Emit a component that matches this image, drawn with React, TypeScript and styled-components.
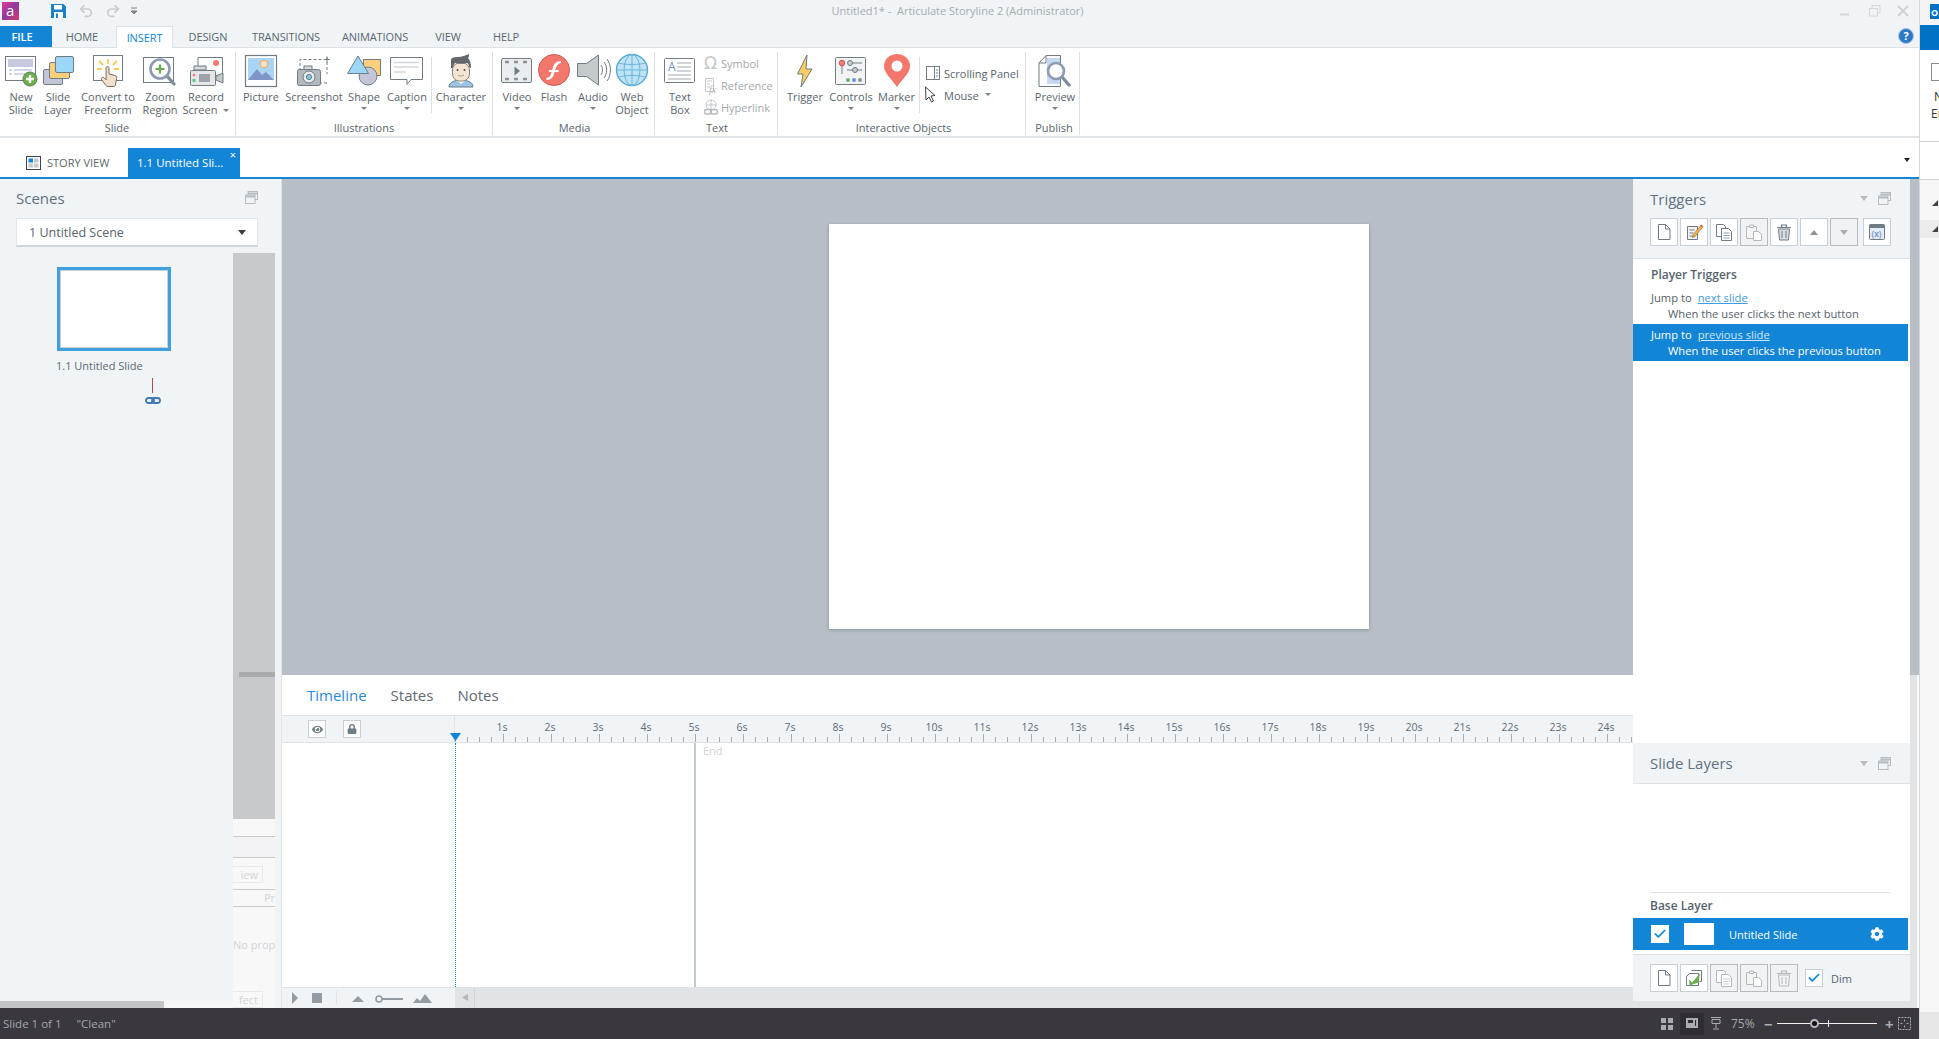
import React from "react";
import styled, { createGlobalStyle } from "styled-components";
import { Check, Redo2, Undo2 } from "lucide-react";
import { FaCog, FaEye, FaLock } from "react-icons/fa";

const GlobalStyle = createGlobalStyle`
  html, body {
    margin: 0;
    padding: 0;
    width: 1939px;
    height: 1039px;
    overflow: hidden;
    font-family: "Open Sans", "Noto Sans", sans-serif;
    background: #f6f6f6;
  }
  * { box-sizing: border-box; }
`;

const Page = styled.div`
  width: 1939px;
  height: 1039px;
  display: flex;
  overflow: hidden;
`;

const Main = styled.div`
  width: 1920px;
  height: 1039px;
  display: flex;
  flex-direction: column;
  border-right: 1px solid #d5d8da;
`;

/* ---- title bar ---- */
const TitleBar = styled.div`
  height: 26px;
  background: #f0f4f7;
  display: grid;
  grid-template-columns: 1fr auto 1fr;
  align-items: center;
  padding-right: 2px;
`;

const Qat = styled.div`
  display: flex;
  align-items: center;
  height: 26px;
  padding: 0 0 4px 2px;
`;

const QatIcon = styled.span<{ $ml: number }>`
  margin-left: ${(p) => p.$ml}px;
  display: flex;
`;

const TitleText = styled.div`
  font-size: 11px;
  color: #a6abb0;
  padding: 0 0 6px 0;
  margin-left: -2px;
  white-space: nowrap;
`;

const WinControls = styled.div`
  display: flex;
  justify-content: flex-end;
  padding: 0 9px 4px 0;
`;

/* ---- menu tabs ---- */
const MenuRow = styled.div`
  height: 22px;
  background: #f0f4f7;
  border-bottom: 1px solid #dde1e4;
  display: flex;
  position: relative;
`;

const MenuTab = styled.div<{ $w: number; $active?: boolean; $file?: boolean; $pr?: number }>`
  width: ${(p) => p.$w}px;
  height: ${(p) => (p.$active ? "22px" : "21px")};
  padding-right: ${(p) => p.$pr ?? 0}px;
  display: flex;
  align-items: center;
  justify-content: center;
  font-size: 11px;
  letter-spacing: -0.1px;
  background: ${(p) => (p.$file ? "#1285d6" : p.$active ? "#fff" : "transparent")};
  color: ${(p) => (p.$file ? "#fff" : p.$active ? "#1285d6" : "#5a666e")};
  border: ${(p) => (p.$active ? "1px solid #dde1e4" : "none")};
  border-bottom: none;
  font-weight: ${(p) => (p.$file ? 600 : 400)};
`;

const HelpBtn = styled.div`
  position: absolute;
  right: 5px;
  top: 2px;
  display: flex;
`;

/* ---- ribbon ---- */
const Ribbon = styled.div`
  height: 90px;
  background: #fff;
  border-bottom: 2px solid #e1e4e6;
  display: flex;
  padding-top: 4px;
  align-items: flex-start;
`;

const Group = styled.div<{ $w: number; $pl?: number }>`
  width: ${(p) => p.$w}px;
  height: 83px;
  border-right: 1px solid #dde1e4;
  padding-left: ${(p) => p.$pl ?? 0}px;
  display: flex;
  flex-direction: column;
  flex-shrink: 0;
`;

const GroupItems = styled.div`
  height: 69px;
  display: flex;
  align-items: flex-start;
`;

const GroupLabel = styled.div<{ $shift?: number }>`
  height: 14px;
  line-height: 14px;
  font-size: 11px;
  color: #59656d;
  text-align: center;
  margin-left: ${(p) => p.$shift ?? 0}px;
`;

const RButton = styled.div<{ $w: number }>`
  width: ${(p) => p.$w}px;
  flex-shrink: 0;
  display: flex;
  flex-direction: column;
  align-items: center;
  padding-top: 2px;
`;

const IconSlot = styled.div`
  width: 40px;
  height: 34px;
  margin-bottom: 2px;
  display: flex;
`;

const RLabel = styled.div`
  font-size: 11px;
  line-height: 13px;
  color: #59656d;
  text-align: center;
  white-space: nowrap;
`;

const Caret = styled.span<{ $inline?: boolean; $color?: string }>`
  display: ${(p) => (p.$inline ? "inline-block" : "block")};
  width: 0;
  height: 0;
  border-left: 3px solid transparent;
  border-right: 3px solid transparent;
  border-top: 3px solid ${(p) => p.$color ?? "#7d8488"};
  margin: ${(p) => (p.$inline ? "0 0 1px 6px" : "4px 0 0")};
  vertical-align: middle;
`;

const VSep = styled.div<{ $ml: number }>`
  width: 1px;
  height: 56px;
  margin: 5px 0 0 ${(p) => p.$ml}px;
  background: #dde1e4;
  flex-shrink: 0;
`;

const SmallCol = styled.div<{ $pt: number; $rowH: number; $ml?: number }>`
  display: grid;
  grid-auto-rows: ${(p) => p.$rowH}px;
  padding-top: ${(p) => p.$pt}px;
  margin-left: ${(p) => p.$ml ?? 0}px;
`;

const SmallItem = styled.div<{ $off?: boolean }>`
  display: flex;
  align-items: center;
  font-size: 11px;
  color: ${(p) => (p.$off ? "#a4a9ad" : "#59656d")};
  white-space: nowrap;
`;

const SmallIcon = styled.span<{ $w: number; $ml?: number }>`
  width: ${(p) => p.$w}px;
  margin-left: ${(p) => p.$ml ?? 0}px;
  display: flex;
  flex-shrink: 0;
`;

/* ---- document tabs ---- */
const DocTabs = styled.div`
  height: 41px;
  padding-top: 10px;
  background: #fff;
  border-bottom: 2px solid #1285d6;
  display: flex;
  position: relative;
`;

const StoryTab = styled.div`
  width: 128px;
  padding-left: 26px;
  display: flex;
  align-items: center;
  font-size: 11px;
  color: #5a666e;
  gap: 6px;
`;

const ActiveDoc = styled.div`
  width: 112px;
  height: 29px;
  background: #1285d6;
  color: #fff;
  font-size: 11.5px;
  display: flex;
  align-items: center;
  padding-left: 9px;
  white-space: nowrap;
  position: relative;
`;

const DocClose = styled.span`
  position: absolute;
  right: 4px;
  top: 0;
  font-size: 11px;
  line-height: 14px;
`;

const TabsCaret = styled.span`
  position: absolute;
  right: 9px;
  top: 20px;
  border-left: 3px solid transparent;
  border-right: 3px solid transparent;
  border-top: 4px solid #222;
`;

/* ---- body ---- */
const Body = styled.div`
  flex: 1;
  min-height: 0;
  display: flex;
  background: #e0e4e7;
`;

const LeftPane = styled.div`
  width: 282px;
  background: #f0f4f7;
  border-right: 1px solid #dfe3e6;
  display: flex;
  flex-direction: column;
  flex-shrink: 0;
`;

const PaneTop = styled.div`
  height: 74px;
  padding: 8px 23px 0 16px;
`;

const PaneTitleRow = styled.div`
  display: flex;
  align-items: center;
  justify-content: space-between;
  height: 21px;
  margin-bottom: 10px;
`;

const PaneTitle = styled.div`
  font-size: 15px;
  color: #5f717f;
`;

const SceneSelect = styled.div`
  height: 29px;
  background: #fff;
  border: 1px solid #e4e7ea;
  border-bottom: 2px solid #cfd4d8;
  display: flex;
  align-items: center;
  justify-content: space-between;
  padding: 0 11px 0 12px;
  font-size: 12.5px;
  color: #57636c;
`;

const SelectCaret = styled.span`
  border-left: 4px solid transparent;
  border-right: 4px solid transparent;
  border-top: 5px solid #3b3f43;
`;

const PaneMain = styled.div`
  flex: 1;
  display: flex;
  min-height: 0;
`;

const ThumbCol = styled.div`
  width: 233px;
  display: flex;
  flex-direction: column;
`;

const ThumbScroll = styled.div`
  flex: 1;
  padding: 14px 0 0 57px;
`;

const Thumb = styled.div`
  width: 114px;
  height: 84px;
  background: #fff;
  border: 3px solid #3fa0e0;
  box-shadow: inset 0 0 0 1px #cfcfd2;
`;

const ThumbLabel = styled.div`
  margin: 8px 0 0 -1px;
  font-size: 11px;
  line-height: 14px;
  color: #5d6973;
`;

const Connector = styled.div`
  width: 1px;
  height: 15px;
  margin: 5px 0 0 95px;
  background: #b9484c;
`;

const LinkWrap = styled.div`
  margin: 4px 0 0 88px;
  display: flex;
`;

const HScroll = styled.div`
  height: 7px;
  background: #f6f6f6;
  display: flex;
`;

const HThumb = styled.div`
  width: 164px;
  background: #c3c5c7;
`;

const SideCol = styled.div`
  width: 42px;
  display: flex;
  flex-direction: column;
`;

const SideBar = styled.div`
  height: 566px;
  background: #c8c9cb;
  padding-top: 419px;
`;

const SideGrip = styled.div`
  width: 36px;
  height: 5px;
  margin-left: 6px;
  background: #a9abad;
`;

const Ghost = styled.div`
  flex: 1;
  background: #f8f8f8;
  display: flex;
  flex-direction: column;
  overflow: hidden;
  padding-top: 17px;
  font-size: 11px;
  color: #d4d4d8;
`;

const GhostBand = styled.div`
  height: 22px;
  background: #f3f3f6;
  border-top: 1px solid #c9c9c9;
  border-bottom: 1px solid #c9c9c9;
`;

const GhostBtn = styled.div<{ $bottom?: boolean }>`
  width: 30px;
  height: 17px;
  margin-top: ${(p) => (p.$bottom ? "auto" : "8px")};
  border: 1px solid #e8e8e8;
  border-left: none;
  text-align: right;
  line-height: 15px;
  padding-right: 4px;
`;

const GhostHead = styled.div`
  height: 18px;
  margin-top: 6px;
  border-top: 1px solid #c9c9c9;
  border-bottom: 1px solid #c9c9c9;
  text-align: right;
  line-height: 16px;
`;

const GhostText = styled.div`
  margin-top: 30px;
  white-space: nowrap;
`;

const Center = styled.div`
  flex: 1;
  min-width: 0;
  display: flex;
  flex-direction: column;
`;

const Canvas = styled.div`
  height: 496px;
  background: #b7bec5;
  padding: 45px 0 0 547px;
`;

const SlidePage = styled.div`
  width: 540px;
  height: 405px;
  background: #fff;
  box-shadow: 0 1px 3px rgba(70, 80, 90, 0.4);
`;

/* ---- timeline ---- */
const Timeline = styled.div`
  flex: 1;
  background: #fff;
  display: flex;
  flex-direction: column;
`;

const TimelineTabs = styled.div`
  height: 40px;
  padding: 0 0 0 25px;
  display: flex;
  align-items: center;
  gap: 24px;
`;

const TimelineTab = styled.div<{ $active?: boolean }>`
  font-size: 15px;
  color: ${(p) => (p.$active ? "#2a8ad8" : "#5f6b74")};
`;

const RulerRow = styled.div`
  height: 28px;
  background: #f0f4f7;
  border-top: 1px solid #dfe3e6;
  border-bottom: 1px solid #dfe3e6;
  display: flex;
`;

const RulerLeft = styled.div`
  width: 173px;
  flex-shrink: 0;
  border-right: 1px solid #dfe3e6;
  padding: 4px 0 0 26px;
  display: flex;
  gap: 17px;
`;

const SquareBtn = styled.div`
  width: 18px;
  height: 18px;
  background: #fff;
  border: 1px solid #c8d0d6;
  display: flex;
  align-items: center;
  justify-content: center;
  color: #6f7d85;
`;

const Tracks = styled.div`
  flex: 1;
  display: flex;
  min-height: 0;
`;

const TrackLeft = styled.div`
  width: 174px;
  flex-shrink: 0;
  border-right: 1px dotted #1285d6;
`;

const TrackRight = styled.div`
  width: 240px;
  flex-shrink: 0;
  border-right: 2px solid #c2c9d0;
`;

const EndLabel = styled.div`
  padding: 0 0 0 7px;
  font-size: 11px;
  color: #cdd4da;
`;

const TimelineBar = styled.div`
  height: 21px;
  background: #e0e4e7;
  border-top: 1px solid #dfe3e6;
  display: flex;
`;

const BarLeft = styled.div`
  width: 173px;
  flex-shrink: 0;
  background: #f0f4f7;
  display: flex;
`;

const BarArrow = styled.div`
  width: 20px;
  height: 20px;
  border-right: 1px solid #d2d6d9;
  display: flex;
  align-items: center;
  justify-content: center;
`;

/* ---- right pane ---- */
const RightPane = styled.div`
  width: 277px;
  flex-shrink: 0;
  background: #fff;
  display: flex;
  flex-direction: column;
`;

const SideHeader = styled.div<{ $h: number }>`
  height: ${(p) => p.$h}px;
  background: #f0f4f7;
  border-bottom: 1px solid #dfe3e6;
  padding: 0 19px 0 17px;
  flex-shrink: 0;
`;

const SideHeaderTop = styled.div<{ $h: number }>`
  height: ${(p) => p.$h}px;
  display: flex;
  align-items: center;
  justify-content: space-between;
`;

const HeaderIcons = styled.div`
  display: flex;
  align-items: center;
  gap: 10px;
`;

const Toolbar = styled.div`
  display: flex;
  gap: 2px;
`;

const ToolBtn = styled.div<{ $off?: boolean; $ml?: number }>`
  width: 28px;
  height: 28px;
  border: 1px solid ${(p) => (p.$off ? "#b7bbbd" : "#c5cfd5")};
  background: ${(p) => (p.$off ? "#f1f2f3" : "#fff")};
  margin-left: ${(p) => p.$ml ?? 0}px;
  display: flex;
  align-items: center;
  justify-content: center;
  flex-shrink: 0;
`;

const TriggerList = styled.div`
  height: 484px;
  padding-top: 7px;
  flex-shrink: 0;
`;

const ListTitle = styled.div`
  font-size: 12px;
  line-height: 18px;
  font-weight: 600;
  color: #56626c;
  padding-left: 18px;
  margin-bottom: 3px;
`;

const TriggerRow = styled.div<{ $selected?: boolean }>`
  width: 275px;
  height: 37px;
  padding: 3px 0 0 18px;
  font-size: 11.2px;
  line-height: 16px;
  background: ${(p) => (p.$selected ? "#1285d6" : "transparent")};
  color: ${(p) => (p.$selected ? "#fff" : "#56626c")};
`;

const TriggerLink = styled.span<{ $selected?: boolean }>`
  color: ${(p) => (p.$selected ? "#cfe7f8" : "#3f9ae0")};
  text-decoration: underline;
  margin-left: 6px;
`;

const TriggerSub = styled.div`
  padding-left: 17px;
  white-space: nowrap;
`;

const LayersBody = styled.div`
  flex: 1;
  display: flex;
  flex-direction: column;
  justify-content: flex-end;
  min-height: 0;
`;

const LayersRule = styled.div`
  margin: 0 20px 0 18px;
  height: 1px;
  background: #dfe3e6;
`;

const BaseTitle = styled.div`
  font-size: 12px;
  font-weight: 600;
  line-height: 25px;
  color: #56626c;
  padding-left: 17px;
`;

const LayerRow = styled.div`
  width: 275px;
  height: 32px;
  margin-bottom: 4px;
  background: #1285d6;
  display: flex;
  align-items: center;
  padding-left: 18px;
  color: #fff;
  font-size: 11px;
`;

const CheckBox = styled.div<{ $bordered?: boolean }>`
  width: 18px;
  height: 18px;
  background: #fff;
  border: 1px solid ${(p) => (p.$bordered ? "#c5cfd5" : "#fff")};
  display: flex;
  align-items: center;
  justify-content: center;
  color: #1285d6;
  flex-shrink: 0;
`;

const LayerSwatch = styled.div`
  width: 30px;
  height: 22px;
  margin: 0 15px;
  background: #fff;
`;

const LayerGear = styled.div`
  margin-left: auto;
  margin-right: 24px;
  display: flex;
`;

const LayerToolbar = styled.div`
  height: 47px;
  background: #f0f4f7;
  border-top: 1px solid #dfe3e6;
  padding: 9px 0 0 17px;
  display: flex;
  align-items: flex-start;
  flex-shrink: 0;
`;

const DimWrap = styled.div`
  display: flex;
  align-items: center;
  gap: 8px;
  margin: 5px 0 0 7px;
  font-size: 11px;
  color: #56626c;
`;

const PaneFoot = styled.div`
  height: 7px;
  background: #e0e4e7;
  flex-shrink: 0;
`;

const Strip = styled.div`
  width: 9px;
  display: flex;
  flex-direction: column;
  flex-shrink: 0;
`;

const StripTop = styled.div`
  height: 496px;
  background: #b7bec5;
`;

const StripBottom = styled.div`
  flex: 1;
  background: #e0e4e7;
  border-right: 2px solid #fbfbfb;
`;

/* ---- status bar ---- */
const StatusBar = styled.div`
  height: 31px;
  background: #3a373f;
  color: #a5a9ad;
  font-size: 11.5px;
  display: flex;
  align-items: center;
  padding: 0 8px 0 3px;
`;

const StatusClean = styled.span`
  margin-left: 15px;
`;

const StatusRight = styled.div`
  margin-left: auto;
  display: flex;
  align-items: center;
`;

const ViewBtn = styled.div<{ $active?: boolean; $ml: number }>`
  width: 24px;
  height: 22px;
  margin-left: ${(p) => p.$ml}px;
  background: ${(p) => (p.$active ? "#2f2c33" : "transparent")};
  display: flex;
  align-items: center;
  justify-content: center;
`;

const ZoomPct = styled.span`
  width: 33px;
  margin-left: 3px;
  font-size: 12px;
`;

const ZoomSign = styled.span`
  width: 8px;
  font-size: 15px;
  line-height: 16px;
  font-weight: 700;
  color: #a9adb1;
  text-align: center;
`;

const ZoomTrack = styled.div`
  position: relative;
  width: 100px;
  height: 1px;
  background: #f2f2f2;
  margin: 0 8px 0 5px;
`;

const ZoomKnob = styled.div`
  position: absolute;
  left: 33px;
  top: -4px;
  width: 9px;
  height: 9px;
  border-radius: 50%;
  background: #111;
  border: 2px solid #b9b9b9;
`;

const ZoomTick = styled.div`
  position: absolute;
  left: 51px;
  top: -3px;
  width: 1px;
  height: 7px;
  background: #f2f2f2;
`;

const FitBtn = styled.span`
  margin-left: 5px;
  display: flex;
`;

/* ---- other window behind, right edge ---- */
const OtherWindow = styled.div`
  width: 19px;
  height: 1039px;
  background: #f7f7f7;
  overflow: hidden;
  display: flex;
  flex-direction: column;
`;

const OtherTop = styled.div`
  height: 25px;
  padding: 4px 0 0 10px;
  background: #f4f4f4;
`;

const OtherBand = styled.div`
  height: 25px;
  background: #0072c6;
`;

const OtherRibbon = styled.div`
  height: 92px;
  background: #fff;
  border-bottom: 1px solid #d2d2d2;
  padding: 13px 0 0 11px;
  font-size: 12px;
  line-height: 17px;
  color: #333;
  white-space: nowrap;
`;

const OtherDoc = styled.div`
  width: 20px;
  height: 18px;
  border: 1px solid #8b8b8b;
  margin-bottom: 7px;
`;

const OtherGap = styled.div`
  height: 38px;
  background: #fff;
  border-bottom: 1px solid #d2d2d2;
`;

const OtherTree = styled.div<{ $shade?: boolean; $mt: number }>`
  height: 18px;
  margin-top: ${(p) => p.$mt}px;
  display: flex;
  align-items: center;
  padding-left: 12px;
  background: ${(p) => (p.$shade ? "#ececec" : "transparent")};
`;

const TreeArrow = styled.span`
  width: 0;
  height: 0;
  border-left: 6px solid transparent;
  border-bottom: 6px solid #444;
`;

const OtherFill = styled.div`
  flex: 1;
  background: #f7f7f7;
`;

const OtherFoot = styled.div`
  height: 27px;
  background: #e6e6e6;
`;

/* ---- drawings ---- */
const Svg: React.FC<{ w?: number; h?: number; children: React.ReactNode }> = ({ w = 40, h = 34, children }) => (
  <svg width={w} height={h} viewBox={`0 0 ${w} ${h}`} fill="none" style={{ overflow: "visible", display: "block" }}>
    {children}
  </svg>
);

const S = "#6f7c84";

const NewSlideIcon = () => (
  <Svg>
    <rect x="4.5" y="2.5" width="30" height="24" fill="#fff" stroke={S} />
    <rect x="7" y="5" width="25" height="8" fill="#c5cadf" />
    <path d="M8 16h3M13 16h18M8 20h3M13 20h12" stroke="#c5cadf" strokeWidth="1.6" />
    <circle cx="29" cy="25" r="7" fill="#6cad4f" stroke="#5d7f55" />
    <path d="M29 21v8M25 25h8" stroke="#fff" strokeWidth="2.4" />
  </Svg>
);

const SlideLayerIcon = () => (
  <Svg>
    <rect x="5.5" y="15.5" width="19" height="15" rx="1.5" fill="#c2c6d8" stroke={S} />
    <rect x="11.5" y="8.5" width="20" height="16" rx="1.5" fill="#fdd07c" stroke={S} />
    <rect x="17.5" y="2.5" width="18" height="16" rx="1.5" fill="#9bd8f7" stroke={S} />
  </Svg>
);

const FreeformIcon = () => (
  <Svg>
    <rect x="5.5" y="1.5" width="29" height="25" fill="#fff" stroke={S} />
    <path d="M20 5v5M11 7l4 4M29 7l-4 4M9 15h5M26 15h5" stroke="#fbc95f" strokeWidth="1.8" />
    <path
      d="M18 14c0-2 3-2 3 0v6l6 1.5c1.5.4 2 1.2 1.6 3l-1.2 6.5c-.2 1-.8 1.5-2 1.5h-5.5c-1 0-1.6-.4-2.2-1.2l-4-5.5c-1.2-1.8 1-3.4 2.4-2l2 2z"
      fill="#f0e1cd"
      stroke="#7d6a5a"
    />
  </Svg>
);

const ZoomRegionIcon = () => (
  <Svg>
    <rect x="3.5" y="3.5" width="30" height="25" fill="#fff" stroke={S} />
    <path d="M27 22l7 8" stroke="#7f8c9c" strokeWidth="3.4" strokeLinecap="round" />
    <circle cx="20" cy="15" r="9.5" fill="#fff" stroke="#8d9bb0" strokeWidth="2.6" />
    <path d="M20 10.5v9M15.5 15h9" stroke="#64ae4c" strokeWidth="2.2" />
  </Svg>
);

const RecordIcon = () => (
  <Svg>
    <path d="M12 15V3.5h24.5v18H29" fill="#fff" stroke={S} />
    <circle cx="30" cy="9" r="3" fill="#ee7b74" />
    <rect x="8" y="12" width="12" height="4" fill="#d6d9dc" stroke={S} />
    <rect x="4.5" y="16.5" width="25" height="15" rx="1" fill="#e4e6e8" stroke={S} />
    <rect x="13" y="20" width="11" height="8" fill="#9da3a8" />
    <circle cx="8" cy="21" r="1.3" fill="#ee7b74" />
    <rect x="6.5" y="25" width="3" height="3" fill="#6cc28f" />
    <path d="M30 22l7-3v10l-7-3z" fill="#c4c9cc" stroke={S} />
  </Svg>
);

const PictureIcon = () => (
  <Svg>
    <rect x="4.5" y="1.5" width="31" height="31" fill="#fff" stroke={S} strokeWidth="1.2" />
    <rect x="7" y="4" width="26" height="22" fill="#a9d4f3" />
    <circle cx="23" cy="10" r="3.8" fill="#fbe3c0" stroke="#f3a86c" />
    <path d="M7 26l9-11 5 6 4-3 8 8z" fill="#7f95c8" />
  </Svg>
);

const ScreenshotIcon = () => (
  <Svg>
    <path d="M6 17V5.5h26M33 3v17M33 29h-6" stroke={S} strokeDasharray="3 2" />
    <path d="M30 5.5h6M33 2.5v6" stroke={S} />
    <rect x="10" y="12" width="8" height="4" fill="#d9dcdf" stroke={S} />
    <rect x="3.5" y="15.5" width="23" height="16" rx="2" fill="#b3b8bc" stroke={S} />
    <circle cx="15" cy="23" r="6" fill="#e8ebed" stroke={S} />
    <circle cx="15" cy="23" r="2.6" fill="#7ccbe0" stroke={S} />
  </Svg>
);

const ShapeIcon = () => (
  <Svg>
    <rect x="19.5" y="5.5" width="17" height="16" fill="#fdd07c" stroke={S} />
    <circle cx="24" cy="22" r="9" fill="#c2c6d8" stroke={S} />
    <path d="M14 2L3.5 19.5h21z" fill="#9bd8f7" stroke={S} />
  </Svg>
);

const CaptionIcon = () => (
  <Svg>
    <path d="M3.5 3.5h32v22H24l-4 5v-5H3.5z" fill="#fff" stroke={S} />
    <path d="M7 8.5h25M7 13h25M7 18h12" stroke="#d4d6d9" strokeWidth="1.6" />
  </Svg>
);

const CharacterIcon = () => (
  <Svg>
    <path d="M8 33c0-5 6-7 12-7s12 2 12 7z" fill="#9bc4e8" stroke={S} />
    <path d="M15 26l5 4 5-4z" fill="#fff" />
    <rect x="11.5" y="9" width="17" height="18" rx="7" fill="#f4e4d2" stroke="#8b8378" />
    <path d="M10 14V6c0-2 3-3 6-3 5 0 9-2 12-3 0 2 0 3-1 4 2 2 3 5 3 10l-2-1c0-2-1-4-2-4-3 1-8 1-12 0-1 1-2 3-2 5z" fill="#63686c" />
    <circle cx="16.5" cy="16" r="1" fill="#55504a" />
    <circle cx="23.5" cy="16" r="1" fill="#55504a" />
    <path d="M17 21c2 1.4 4 1.4 6 0" stroke="#a7967f" />
  </Svg>
);

const VideoIcon = () => (
  <Svg>
    <rect x="4.5" y="4.5" width="30" height="24" rx="1.5" fill="#e9edf0" stroke={S} />
    <path d="M8 8h4M17 8h4M26 8h4M8 25h4M17 25h4M26 25h4" stroke="#8b9298" strokeWidth="2.4" />
    <path d="M17.5 12.5l5.5 4.5-5.5 4.5z" fill="#6f7c84" />
  </Svg>
);

const FlashIcon = () => (
  <Svg>
    <circle cx="20" cy="16" r="15.5" fill="#f4776c" stroke="#cf5a50" />
    <path
      d="M27 7c-5 0-7 3-8 6l-.8 3h-3l-.5 2h3c-1 3.5-2 5.500-5.200 6v2c5 0 7-3 8.200-8h3.700l.5-2h-3.700c1-3 2.300-6.500 5.800-7z"
      fill="#fff"
    />
  </Svg>
);

const AudioIcon = () => (
  <Svg>
    <path d="M4.5 9.5h9l12-8.500v30l-12-8.500h-9z" fill="#c4c9cc" stroke={S} />
    <path d="M28 11c2 3 2 7 0 10M31 8c3.500 4.500 3.500 11.500 0 16M34 5c4.500 6 4.500 16 0 22" stroke={S} />
  </Svg>
);

const WebIcon = () => (
  <Svg>
    <circle cx="20" cy="16" r="15.5" fill="#bfe3f6" stroke="#5aa9cc" strokeWidth="1.4" />
    <path d="M20 .5v31M4.5 16h31M6 9c8 2 20 2 28 0M6 23c8-2 20-2 28 0" stroke="#6bb4d6" />
    <ellipse cx="20" cy="16" rx="8" ry="15.5" stroke="#6bb4d6" />
  </Svg>
);

const TextBoxIcon = () => (
  <Svg>
    <rect x="4.5" y="4.5" width="30" height="24" rx="1" fill="#fff" stroke={S} />
    <text x="8" y="17" fontSize="12" fontFamily="Open Sans" fill="#6f8fd0">A</text>
    <path d="M17 9h14M17 13h14M17 17h14M8 21h23M8 25h23" stroke="#c2c6ca" strokeWidth="1.5" />
  </Svg>
);

const TriggerIcon = () => (
  <Svg>
    <path d="M22 1L12.5 20h5.5L16 33l11-18h-6z" fill="#fbcb65" stroke={S} />
  </Svg>
);

const ControlsIcon = () => (
  <Svg>
    <rect x="4.5" y="3.5" width="30" height="27" rx="1" fill="#f1f3f4" stroke={S} />
    <circle cx="11" cy="9" r="2.8" fill="#ee7b74" stroke="#b95f5a" />
    <path d="M11 12v8M20 9h11" stroke={S} />
    <circle cx="19" cy="9" r="2.5" fill="#c6ccd0" stroke={S} />
    <path d="M16 16h15" stroke={S} />
    <circle cx="24" cy="16" r="2.5" fill="#c6ccd0" stroke={S} />
    <circle cx="17" cy="26" r="2" fill="#6cb46c" />
    <circle cx="23" cy="26" r="2" fill="#6f95d8" />
    <circle cx="29" cy="26" r="2" fill="#8b9298" />
  </Svg>
);

const MarkerIcon = () => (
  <Svg>
    <path d="M20 33C13 23 7 19 7 12a13 12 0 0 1 26 0c0 7-6 11-13 21z" fill="#f4776c" />
    <circle cx="20" cy="12" r="5.5" fill="#fff" />
  </Svg>
);

const PreviewIcon = () => (
  <Svg>
    <path d="M4 9l7-7.500h14.500v31H4z" fill="#fff" stroke={S} />
    <path d="M4 9h7V1.500" stroke={S} />
    <rect x="12" y="4" width="13" height="26" fill="#c6d8f2" />
    <path d="M27 23l7 8" stroke="#7f8c9c" strokeWidth="3.4" strokeLinecap="round" />
    <circle cx="21" cy="17" r="8" fill="#fff" stroke="#8d9bb0" strokeWidth="2.6" />
  </Svg>
);

const SmallGlyph: React.FC<{ kind: string }> = ({ kind }) => (
  <Svg w={16} h={16}>
    {kind === "symbol" && (
      <text x="1" y="14" fontSize="17" fontFamily="DejaVu Sans" fill="#c3c7ca">Ω</text>
    )}
    {kind === "ref" && (
      <>
        <path d="M2.5 1.5h8v13h-8z" stroke="#c3c7ca" />
        <path d="M4 4h5M4 7h3M4 10h3" stroke="#c3c7ca" />
        <text x="6" y="16" fontSize="10" fontStyle="italic" fontFamily="Liberation Serif" fill="#b1b5b8">fx</text>
      </>
    )}
    {kind === "link" && (
      <>
        <circle cx="8" cy="6" r="5" stroke="#c3c7ca" />
        <path d="M3 6h10M8 1v10" stroke="#c3c7ca" />
        <rect x="1.5" y="10.5" width="7" height="4.5" rx="2.2" stroke="#b6babd" strokeWidth="1.4" />
        <rect x="7.5" y="10.5" width="7" height="4.5" rx="2.2" stroke="#b6babd" strokeWidth="1.4" />
      </>
    )}
    {kind === "panel" && (
      <>
        <rect x="1.5" y="1.5" width="13" height="13" fill="#fff" stroke={S} />
        <path d="M9.5 1.5v13M11 5h2M11 8h2M11 11h2" stroke={S} />
      </>
    )}
    {kind === "mouse" && (
      <path d="M1.5 1l.5 13 3-3 2.5 5 2-1-2.500-5 4-.5z" fill="#fff" stroke="#444" transform="translate(-1 -1)" />
    )}
  </Svg>
);

const RestoreIcon: React.FC<{ color?: string }> = ({ color = "#b5bdc3" }) => (
  <Svg w={13} h={13}>
    <rect x="3" y=".5" width="9.5" height="8" stroke={color} fill="#f0f4f7" />
    <path d="M3 2.5h9.5" stroke={color} strokeWidth="2" />
    <rect x=".5" y="4" width="9.5" height="8.5" stroke={color} fill="#f0f4f7" />
    <path d="M.5 5.500H10" stroke={color} strokeWidth="2" />
  </Svg>
);

const DownCaret = styled.span`
  border-left: 4px solid transparent;
  border-right: 4px solid transparent;
  border-top: 5px solid #b5bdc3;
`;

type ToolKind = "new" | "edit" | "copy" | "paste" | "trash" | "up" | "down" | "vars" | "dup";

const ToolGlyph: React.FC<{ kind: ToolKind; off?: boolean }> = ({ kind, off }) => {
  const c = off ? "#b4b9bc" : "#6f7c84";
  return (
    <Svg w={18} h={18}>
      {kind === "new" && <path d="M3.5 1.5h7l4.5 4.5v10.5H3.5zM10.5 1.5V6H15" stroke={c} fill="#fff" />}
      {kind === "edit" && (
        <>
          <path d="M2.5 3.5h10v13h-10z" stroke={c} fill="#f1f2f3" />
          <path d="M4.5 7h5M4.5 10h4M4.5 13h6" stroke={c} />
          <path d="M8 12l8-10 2 1.5-8 10-2.5 1z" fill="#fbb54e" stroke="#9a6b3a" strokeWidth=".7" />
          <path d="M15 2.5l1-1 2 1.500-1 1.200z" fill="#e46a5f" />
        </>
      )}
      {kind === "copy" && (
        <>
          <path d="M1.5 1.5h7l2 2v10h-9z" stroke={c} fill="#fff" />
          <path d="M6.5 5.5h7l3 3v9h-10z" stroke={c} fill="#fff" />
          <path d="M8.5 10h6M8.5 12.5h6M8.5 15h6" stroke={off ? "#ccd0d3" : "#8ca3c4"} />
        </>
      )}
      {kind === "paste" && (
        <>
          <path d="M1.5 3.5h10v12h-10z" stroke={c} fill="#f4f4f4" />
          <path d="M4.5 4.5V2h4v2.5z" stroke={c} fill="#fff" />
          <path d="M8.5 8.5h5l3 3v6h-8z" stroke={c} fill="#fff" />
        </>
      )}
      {kind === "trash" && (
        <>
          <path d="M2 4.5h14M6.5 4.5V2h5v2.500" stroke={c} strokeWidth="1.2" />
          <path d="M3.5 6h11l-1 11h-9z" stroke={c} fill={off ? "#f4f4f4" : "#d9dde0"} />
          <path d="M7 8v7M11 8v7" stroke={c} />
        </>
      )}
      {kind === "up" && <path d="M5 12l4-5 4 5z" fill="#8a9196" />}
      {kind === "down" && <path d="M5 7h8l-4 5z" fill="#a8aeb2" />}
      {kind === "vars" && (
        <>
          <rect x="1.5" y="1.5" width="15" height="15" rx="1" fill="#e4ebf6" stroke={c} />
          <rect x="1.5" y="1.5" width="15" height="3.5" fill={c} />
          <text x="3.5" y="13.5" fontSize="8" fontWeight="700" fontFamily="Open Sans" fill="#7f9ccc">(x)</text>
        </>
      )}
      {kind === "dup" && (
        <>
          <path d="M6.5 1.5h10v11h-2" stroke={c} fill="#fff" />
          <path d="M1.5 7.5l3-3h9v12h-12z" stroke={c} fill="#fff" />
          <path d="M4 10.5l3 3 8-9-1.500 9-9 3z" fill="#6cad4f" />
        </>
      )}
    </Svg>
  );
};

const AppLogo = () => (
  <svg width="17" height="18" viewBox="0 0 17 18" style={{ display: "block" }}>
    <defs>
      <linearGradient id="logoFill" x1="0" y1="0" x2="1" y2="1">
        <stop offset="0" stopColor="#e8379a" />
        <stop offset="0.5" stopColor="#8c3b9e" />
        <stop offset="1" stopColor="#d93a6e" />
      </linearGradient>
    </defs>
    <rect width="17" height="18" fill="url(#logoFill)" />
    <text x="4" y="14" fontSize="15" fontFamily="Open Sans" fill="#fff">a</text>
  </svg>
);

const SaveIcon = () => (
  <Svg w={15} h={14}>
    <path d="M0 0h12.5L15 2.5V14H0z" fill="#1a80c8" />
    <rect x="3" y="1" width="8" height="4.5" fill="#fff" />
    <rect x="3" y="8" width="9" height="6" fill="#fff" />
    <rect x="5" y="9.5" width="2" height="4.5" fill="#1a80c8" />
  </Svg>
);

const ChainIcon = () => (
  <Svg w={16} h={7}>
    <rect x="1" y="1" width="8" height="5" rx="2.5" stroke="#3f78b5" strokeWidth="1.8" />
    <rect x="7" y="1" width="8" height="5" rx="2.5" stroke="#3f78b5" strokeWidth="1.8" />
  </Svg>
);

const ruler = Array.from({ length: 24 * 4 + 4 }, (_, i) => i);

const RulerTrack = () => (
  <svg width="1177" height="26" style={{ overflow: "visible", display: "block" }}>
    {ruler.map((i) => (
      <line
        key={i}
        x1={i * 12 + 0.5}
        x2={i * 12 + 0.5}
        y1={i % 4 === 0 ? 18 : 21}
        y2={26}
        stroke="#a7aeb3"
        strokeWidth={1}
      />
    ))}
    {Array.from({ length: 24 }, (_, i) => i + 1).map((s) => (
      <text key={s} x={s * 48 - 1} y={15} fontSize="10.5" fontFamily="Open Sans" fill="#5f6b74" textAnchor="middle">
        {s}s
      </text>
    ))}
    <path d="M-5 17h11l-5.5 8z" fill="#1285d6" />
  </svg>
);

function RibbonBtn(props: { w: number; icon: React.ReactNode; label: React.ReactNode; caret?: boolean }) {
  return (
    <RButton $w={props.w}>
      <IconSlot>{props.icon}</IconSlot>
      <RLabel>{props.label}</RLabel>
      {props.caret && <Caret />}
    </RButton>
  );
}

const App: React.FC = () => {
  return (
    <>
      <GlobalStyle />
      <Page>
        <Main>
          <TitleBar>
            <Qat>
              <AppLogo />
              <QatIcon $ml={32}><SaveIcon /></QatIcon>
              <QatIcon $ml={12}><Undo2 size={16} color="#c9cdd1" strokeWidth={2.6} /></QatIcon>
              <QatIcon $ml={11}><Redo2 size={16} color="#c9cdd1" strokeWidth={2.6} /></QatIcon>
              <QatIcon $ml={9}>
                <Svg w={8} h={8}>
                  <path d="M1 1h6M1 4h6l-3 3z" stroke="#7c8389" fill="#7c8389" />
                </Svg>
              </QatIcon>
            </Qat>
            <TitleText>Untitled1* -&nbsp; Articulate Storyline 2 (Administrator)</TitleText>
            <WinControls>
              <Svg w={70} h={14}>
                <path d="M2 10.5h9" stroke="#d3d7da" strokeWidth="2" />
                <g transform="translate(31 1)">
                  <rect x="3" y=".5" width="8" height="7" stroke="#d3d7da" />
                  <rect x=".5" y="3.5" width="8" height="7.5" stroke="#d3d7da" fill="#f0f4f7" />
                </g>
                <path d="M60 2l10 10M70 2L60 12" stroke="#cfd3d6" strokeWidth="2" />
              </Svg>
            </WinControls>
          </TitleBar>

          <MenuRow>
            <MenuTab $w={52} $file $pr={8}>FILE</MenuTab>
            <MenuTab $w={64} $pr={4}>HOME</MenuTab>
            <MenuTab $w={57} $active>INSERT</MenuTab>
            <MenuTab $w={70}>DESIGN</MenuTab>
            <MenuTab $w={86}>TRANSITIONS</MenuTab>
            <MenuTab $w={92}>ANIMATIONS</MenuTab>
            <MenuTab $w={54}>VIEW</MenuTab>
            <MenuTab $w={62}>HELP</MenuTab>
            <HelpBtn>
              <svg width="16" height="16" viewBox="0 0 16 16" style={{ display: "block" }}>
                <circle cx="8" cy="8" r="7.5" fill="#2f79c9" stroke="#a8c4e2" />
                <text x="8" y="12" fontSize="11" fontWeight="700" fontFamily="Open Sans" fill="#fff" textAnchor="middle">?</text>
              </svg>
            </HelpBtn>
          </MenuRow>

          <Ribbon>
            <Group $w={236} $pl={2}>
              <GroupItems>
                <RibbonBtn w={38} icon={<NewSlideIcon />} label={<>New<br />Slide</>} />
                <RibbonBtn w={36} icon={<SlideLayerIcon />} label={<>Slide<br />Layer</>} />
                <RibbonBtn w={64} icon={<FreeformIcon />} label={<>Convert to<br />Freeform</>} />
                <RibbonBtn w={40} icon={<ZoomRegionIcon />} label={<>Zoom<br />Region</>} />
                <RibbonBtn w={52} icon={<RecordIcon />} label={<>Record<br />Screen<Caret $inline /></>} />
              </GroupItems>
              <GroupLabel $shift={-3}>Slide</GroupLabel>
            </Group>

            <Group $w={257}>
              <GroupItems>
                <RibbonBtn w={50} icon={<PictureIcon />} label="Picture" />
                <RibbonBtn w={56} icon={<ScreenshotIcon />} label="Screenshot" caret />
                <RibbonBtn w={44} icon={<ShapeIcon />} label="Shape" caret />
                <RibbonBtn w={42} icon={<CaptionIcon />} label="Caption" caret />
                <VSep $ml={3} />
                <RibbonBtn w={58} icon={<CharacterIcon />} label="Character" caret />
              </GroupItems>
              <GroupLabel>Illustrations</GroupLabel>
            </Group>

            <Group $w={162}>
              <GroupItems>
                <RibbonBtn w={48} icon={<VideoIcon />} label="Video" caret />
                <RibbonBtn w={26} icon={<FlashIcon />} label="Flash" />
                <RibbonBtn w={52} icon={<AudioIcon />} label="Audio" caret />
                <RibbonBtn w={26} icon={<WebIcon />} label={<>Web<br />Object</>} />
              </GroupItems>
              <GroupLabel $shift={2}>Media</GroupLabel>
            </Group>

            <Group $w={123}>
              <GroupItems>
                <RibbonBtn w={50} icon={<TextBoxIcon />} label={<>Text<br />Box</>} />
                <SmallCol $pt={0} $rowH={22} $ml={-2}>
                  <SmallItem $off><SmallIcon $w={18}><SmallGlyph kind="symbol" /></SmallIcon>Symbol</SmallItem>
                  <SmallItem $off><SmallIcon $w={18}><SmallGlyph kind="ref" /></SmallIcon>Reference</SmallItem>
                  <SmallItem $off><SmallIcon $w={18}><SmallGlyph kind="link" /></SmallIcon>Hyperlink</SmallItem>
                </SmallCol>
              </GroupItems>
              <GroupLabel $shift={2}>Text</GroupLabel>
            </Group>

            <Group $w={248} $pl={4}>
              <GroupItems>
                <RibbonBtn w={46} icon={<TriggerIcon />} label="Trigger" />
                <RibbonBtn w={46} icon={<ControlsIcon />} label="Controls" caret />
                <RibbonBtn w={45} icon={<MarkerIcon />} label="Marker" caret />
                <VSep $ml={0} />
                <SmallCol $pt={10} $rowH={22}>
                  <SmallItem><SmallIcon $w={19} $ml={5}><SmallGlyph kind="panel" /></SmallIcon>Scrolling Panel</SmallItem>
                  <SmallItem><SmallIcon $w={19} $ml={5}><SmallGlyph kind="mouse" /></SmallIcon>Mouse<Caret $inline /></SmallItem>
                </SmallCol>
              </GroupItems>
              <GroupLabel>Interactive Objects</GroupLabel>
            </Group>

            <Group $w={54} $pl={3}>
              <GroupItems>
                <RibbonBtn w={52} icon={<PreviewIcon />} label="Preview" caret />
              </GroupItems>
              <GroupLabel>Publish</GroupLabel>
            </Group>
          </Ribbon>

          <DocTabs>
            <StoryTab>
              <Svg w={15} h={14}>
                <rect x=".5" y=".5" width="14" height="13" fill="#fff" stroke="#3e4448" />
                <rect x="2.5" y="2.5" width="4.5" height="4" fill="#1285d6" />
                <rect x="8" y="2.5" width="4.5" height="4" fill="#c4c8cb" />
                <rect x="2.5" y="7.5" width="4.5" height="4" fill="#c4c8cb" />
                <rect x="8" y="7.5" width="4.5" height="4" fill="#c4c8cb" />
              </Svg>
              STORY VIEW
            </StoryTab>
            <ActiveDoc>
              1.1 Untitled Sli...
              <DocClose>×</DocClose>
            </ActiveDoc>
            <TabsCaret />
          </DocTabs>

          <Body>
            <LeftPane>
              <PaneTop>
                <PaneTitleRow>
                  <PaneTitle>Scenes</PaneTitle>
                  <RestoreIcon />
                </PaneTitleRow>
                <SceneSelect>
                  1 Untitled Scene
                  <SelectCaret />
                </SceneSelect>
              </PaneTop>
              <PaneMain>
                <ThumbCol>
                  <ThumbScroll>
                    <Thumb />
                    <ThumbLabel>1.1 Untitled Slide</ThumbLabel>
                    <Connector />
                    <LinkWrap><ChainIcon /></LinkWrap>
                  </ThumbScroll>
                  <HScroll><HThumb /></HScroll>
                </ThumbCol>
                <SideCol>
                  <SideBar><SideGrip /></SideBar>
                  <Ghost>
                    <GhostBand />
                    <GhostBtn>iew</GhostBtn>
                    <GhostHead>Pr</GhostHead>
                    <GhostText>No prope</GhostText>
                    <GhostBtn $bottom>fect</GhostBtn>
                  </Ghost>
                </SideCol>
              </PaneMain>
            </LeftPane>

            <Center>
              <Canvas><SlidePage /></Canvas>
              <Timeline>
                <TimelineTabs>
                  <TimelineTab $active>Timeline</TimelineTab>
                  <TimelineTab>States</TimelineTab>
                  <TimelineTab>Notes</TimelineTab>
                </TimelineTabs>
                <RulerRow>
                  <RulerLeft>
                    <SquareBtn><FaEye size={11} /></SquareBtn>
                    <SquareBtn><FaLock size={10} /></SquareBtn>
                  </RulerLeft>
                  <RulerTrack />
                </RulerRow>
                <Tracks>
                  <TrackLeft />
                  <TrackRight />
                  <EndLabel>End</EndLabel>
                </Tracks>
                <TimelineBar>
                  <BarLeft>
                    <Svg w={173} h={20}>
                      <path d="M10 4l6 6-6 6z" fill="#939ca3" />
                      <rect x="30" y="5" width="10" height="10" fill="#939ca3" />
                      <path d="M54.5 3v13" stroke="#dfe3e6" />
                      <path d="M70 14l6-6 6 6z" fill="#939ca3" />
                      <circle cx="97" cy="11" r="3" stroke="#939ca3" strokeWidth="1.6" fill="#f0f4f7" />
                      <path d="M100 11h21" stroke="#939ca3" strokeWidth="2" />
                      <path d="M131 15l4-5 3 3 5-7 7 9z" fill="#939ca3" />
                    </Svg>
                  </BarLeft>
                  <BarArrow>
                    <Svg w={6} h={8}><path d="M6 0v7L0 3.5z" fill="#b3b9bd" /></Svg>
                  </BarArrow>
                </TimelineBar>
              </Timeline>
            </Center>

            <RightPane>
              <SideHeader $h={80}>
                <SideHeaderTop $h={39}>
                  <PaneTitle>Triggers</PaneTitle>
                  <HeaderIcons><DownCaret /><RestoreIcon /></HeaderIcons>
                </SideHeaderTop>
                <Toolbar>
                  <ToolBtn><ToolGlyph kind="new" /></ToolBtn>
                  <ToolBtn><ToolGlyph kind="edit" /></ToolBtn>
                  <ToolBtn><ToolGlyph kind="copy" /></ToolBtn>
                  <ToolBtn $off><ToolGlyph kind="paste" off /></ToolBtn>
                  <ToolBtn><ToolGlyph kind="trash" /></ToolBtn>
                  <ToolBtn><ToolGlyph kind="up" /></ToolBtn>
                  <ToolBtn $off><ToolGlyph kind="down" off /></ToolBtn>
                  <ToolBtn $ml={3}><ToolGlyph kind="vars" /></ToolBtn>
                </Toolbar>
              </SideHeader>
              <TriggerList>
                <ListTitle>Player Triggers</ListTitle>
                <TriggerRow>
                  Jump to<TriggerLink>next slide</TriggerLink>
                  <TriggerSub>When the user clicks the next button</TriggerSub>
                </TriggerRow>
                <TriggerRow $selected>
                  Jump to<TriggerLink $selected>previous slide</TriggerLink>
                  <TriggerSub>When the user clicks the previous button</TriggerSub>
                </TriggerRow>
              </TriggerList>
              <SideHeader $h={41}>
                <SideHeaderTop $h={40}>
                  <PaneTitle>Slide Layers</PaneTitle>
                  <HeaderIcons><DownCaret /><RestoreIcon /></HeaderIcons>
                </SideHeaderTop>
              </SideHeader>
              <LayersBody>
                <LayersRule />
                <BaseTitle>Base Layer</BaseTitle>
                <LayerRow>
                  <CheckBox><Check size={14} strokeWidth={3} /></CheckBox>
                  <LayerSwatch />
                  Untitled Slide
                  <LayerGear><FaCog size={14} /></LayerGear>
                </LayerRow>
              </LayersBody>
              <LayerToolbar>
                <Toolbar>
                  <ToolBtn><ToolGlyph kind="new" /></ToolBtn>
                  <ToolBtn><ToolGlyph kind="dup" /></ToolBtn>
                  <ToolBtn $off><ToolGlyph kind="copy" off /></ToolBtn>
                  <ToolBtn $off><ToolGlyph kind="paste" off /></ToolBtn>
                  <ToolBtn $off><ToolGlyph kind="trash" off /></ToolBtn>
                </Toolbar>
                <DimWrap>
                  <CheckBox $bordered><Check size={14} strokeWidth={3} /></CheckBox>
                  Dim
                </DimWrap>
              </LayerToolbar>
              <PaneFoot />
            </RightPane>

            <Strip>
              <StripTop />
              <StripBottom />
            </Strip>
          </Body>

          <StatusBar>
            Slide 1 of 1
            <StatusClean>"Clean"</StatusClean>
            <StatusRight>
              <Svg w={12} h={12}>
                <path d="M0 0h5v5H0zM7 0h5v5H7zM0 7h5v5H0zM7 7h5v5H7z" fill="#a9adb1" />
              </Svg>
              <ViewBtn $active $ml={7}>
                <Svg w={12} h={12}>
                  <path d="M0 0h12v10H0zM2 2v3h5V2zM9 2v6h1V2z" fillRule="evenodd" fill="#a9adb1" />
                </Svg>
              </ViewBtn>
              <ViewBtn $ml={0}>
                <Svg w={12} h={13}>
                  <path d="M1 .5h10M2 2.5h8v4H2zM6 7v4M3 12h6" stroke="#a9adb1" />
                </Svg>
              </ViewBtn>
              <ZoomPct>75%</ZoomPct>
              <ZoomSign>−</ZoomSign>
              <ZoomTrack>
                <ZoomKnob />
                <ZoomTick />
              </ZoomTrack>
              <ZoomSign>+</ZoomSign>
              <FitBtn>
                <Svg w={13} h={13}>
                  <rect x=".5" y=".5" width="12" height="12" stroke="#a9adb1" strokeDasharray="2 1" />
                  <path d="M6.5 2.5v2M6.5 8.5v2M2.5 6.5h2M8.5 6.5h2" stroke="#a9adb1" />
                </Svg>
              </FitBtn>
            </StatusRight>
          </StatusBar>
        </Main>

        <OtherWindow>
          <OtherTop>
            <Svg w={9} h={15}><rect width="9" height="15" fill="#0072c6" /><text x="1" y="12" fontSize="9" fontWeight="700" fontFamily="Open Sans" fill="#fff">O</text></Svg>
          </OtherTop>
          <OtherBand />
          <OtherRibbon>
            <OtherDoc />
            &nbsp;N
            <br />
            En
          </OtherRibbon>
          <OtherGap />
          <OtherTree $mt={14}><TreeArrow /></OtherTree>
          <OtherTree $mt={8} $shade><TreeArrow /></OtherTree>
          <OtherFill />
          <OtherFoot />
        </OtherWindow>
      </Page>
    </>
  );
};

export default App;
